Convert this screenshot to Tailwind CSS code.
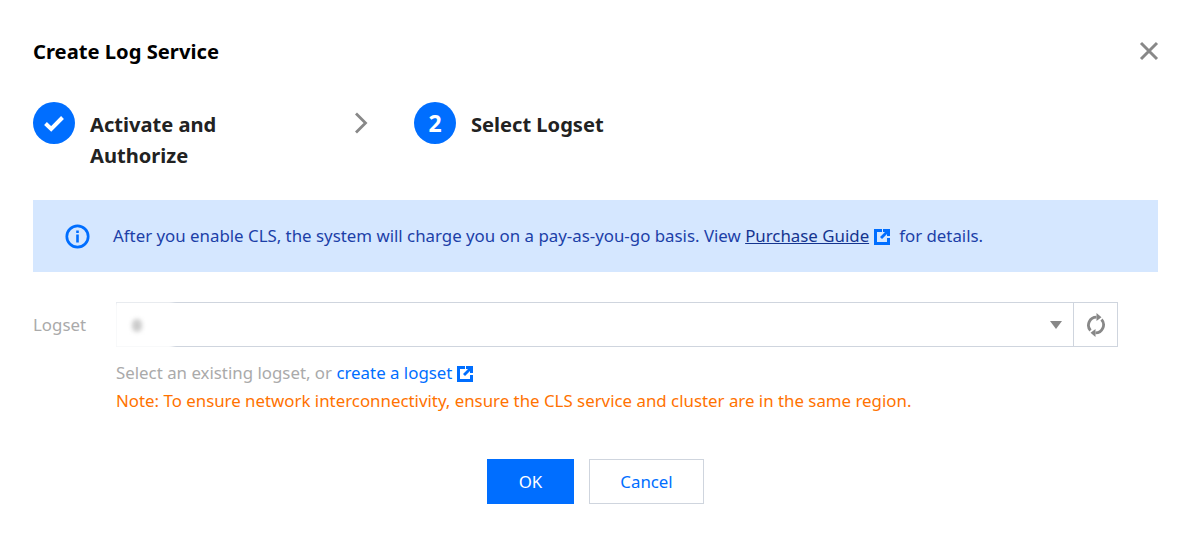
<!DOCTYPE html>
<html lang="en">

<head>
  <meta charset="UTF-8" />
  <title>Create Log Service</title>
  <script src="https://cdn.jsdelivr.net/npm/@tailwindcss/browser@4"></script>
</head>

<body class="w-[1190px] h-[539px] overflow-hidden bg-white font-['Noto_Sans','Open_Sans',sans-serif] text-[16.85px] text-[#444]">
  <div class="flex flex-col pl-[33px] pr-[32px] pt-[36px]">
    <!-- Header -->
    <div class="flex justify-between items-center h-[30px]">
      <h1 class="text-[20.2px] leading-[30px] font-bold text-black">Create Log Service</h1>
      <svg class="mr-[-2px]" width="22" height="22" viewBox="0 0 22 22" fill="none" stroke="#888" stroke-width="3">
        <path d="M3 3l16 16M19 3L3 19" />
      </svg>
    </div>

    <!-- Steps -->
    <div class="flex items-start mt-[36px] h-[98px]">
      <div class="flex w-[381px]">
        <div class="w-[42px] h-[42px] rounded-full bg-[#006eff] flex items-center justify-center shrink-0">
          <svg width="24" height="24" viewBox="0 0 24 24" fill="none" stroke="#fff" stroke-width="4">
            <path d="M3.500 12.500l5.700 5.500L20.500 6.500" />
          </svg>
        </div>
        <div class="w-[180px] ml-[15px] text-[20.1px] leading-[31px] font-bold text-[#222] pt-[7px]">Activate and Authorize</div>
        <svg class="ml-[83px] mt-[9px]" width="16" height="24" viewBox="0 0 16 24" fill="none" stroke="#888" stroke-width="2.800">
          <path d="M3 2.500l9.500 9.500L3 21.500" />
        </svg>
      </div>
      <div class="flex">
        <div class="w-[42px] h-[42px] rounded-full bg-[#006eff] flex items-center justify-center text-white text-[23px] font-bold">2</div>
        <div class="ml-[15px] text-[20.1px] leading-[31px] font-bold text-[#222] pt-[7px]">Select Logset</div>
      </div>
    </div>

    <!-- Info alert -->
    <div class="flex items-center h-[72px] bg-[#d5e7ff] pl-[32px] text-[#1c3fa8]">
      <svg width="25" height="25" viewBox="0 0 25 25" fill="none" class="shrink-0">
        <circle cx="12.500" cy="12.500" r="10.700" stroke="#006eff" stroke-width="2.700" />
        <path d="M11.200 6.500h2.600v2.600h-2.600zM11.200 10.500h2.600v8h-2.600z" fill="#006eff" />
      </svg>
      <p class="ml-[23px] whitespace-nowrap">After you enable CLS, the system will charge you on a pay-as-you-go basis. View <a class="underline text-[#14348f]">Purchase Guide</a><svg class="inline-block ml-[5px] align-[-3px]" width="16" height="16" viewBox="0 0 16 16">
          <path fill="#006eff" d="M0 0h8v3H3v10h10V9h3v7H0zM9 0h7v7h-3V5L8 10 6 8l5-5H9z" />
        </svg><span class="ml-[9px]">for details.</span></p>
    </div>

    <!-- Logset form row -->
    <div class="flex mt-[30px] relative">
      <label class="w-[83px] h-[45px] leading-[45px] text-[#aaa]">Logset</label>
      <div class="w-[1002px]">
        <div class="flex h-[45px] border border-[#cfd5de]">
          <div class="flex-1 flex items-center justify-end pr-[11px]">
            <div class="w-0 h-0 border-x-[6px] border-x-transparent border-t-[8px] border-t-[#888] mt-[1px]"></div>
          </div>
          <div class="w-[44px] border-l border-[#cfd5de] flex items-center justify-center">
            <svg width="20" height="24" viewBox="0 0 20 24" fill="none" stroke="#888" stroke-width="2.800">
              <path d="M4.500 17.500A8 8 0 0 1 10.500 4.200" />
              <path d="M15.500 6.500A8 8 0 0 1 9.500 19.800" />
              <path fill="#888" stroke="none" d="M10.500 0l5 4.300-5 3.700zM9.500 24l-5-4.300 5-3.700z" />
            </svg>
          </div>
        </div>
        <p class="mt-[11px] leading-[30px] text-[#aaa] whitespace-nowrap">Select an existing logset, or <a class="text-[#006eff]">create a logset</a><svg class="inline-block ml-[5px] align-[-3px]" width="16" height="16" viewBox="0 0 16 16">
            <path fill="#006eff" d="M0 0h8v3H3v10h10V9h3v7H0zM9 0h7v7h-3V5L8 10 6 8l5-5H9z" />
          </svg></p>
        <p class="leading-[26px] text-[#ff7200] whitespace-nowrap">Note: To ensure network interconnectivity, ensure the CLS service and cluster are in the same region.</p>
      </div>
      <!-- blurred-out logset name -->
      <div class="absolute left-[80px] top-[0px] w-[60px] h-[48px] bg-white/90 blur-[2px]"></div>
      <div class="absolute left-[99px] top-[17px] w-[10px] h-[13px] rounded-full bg-[#ccc] blur-[2px]"></div>
    </div>

    <!-- Footer buttons -->
    <div class="flex justify-center gap-[15px] mt-[45px]">
      <button class="w-[87px] h-[45px] bg-[#006eff] text-white">OK</button>
      <button class="w-[115px] h-[45px] bg-white border border-[#cfd5de] text-[#006eff]">Cancel</button>
    </div>
  </div>
</body>

</html>
